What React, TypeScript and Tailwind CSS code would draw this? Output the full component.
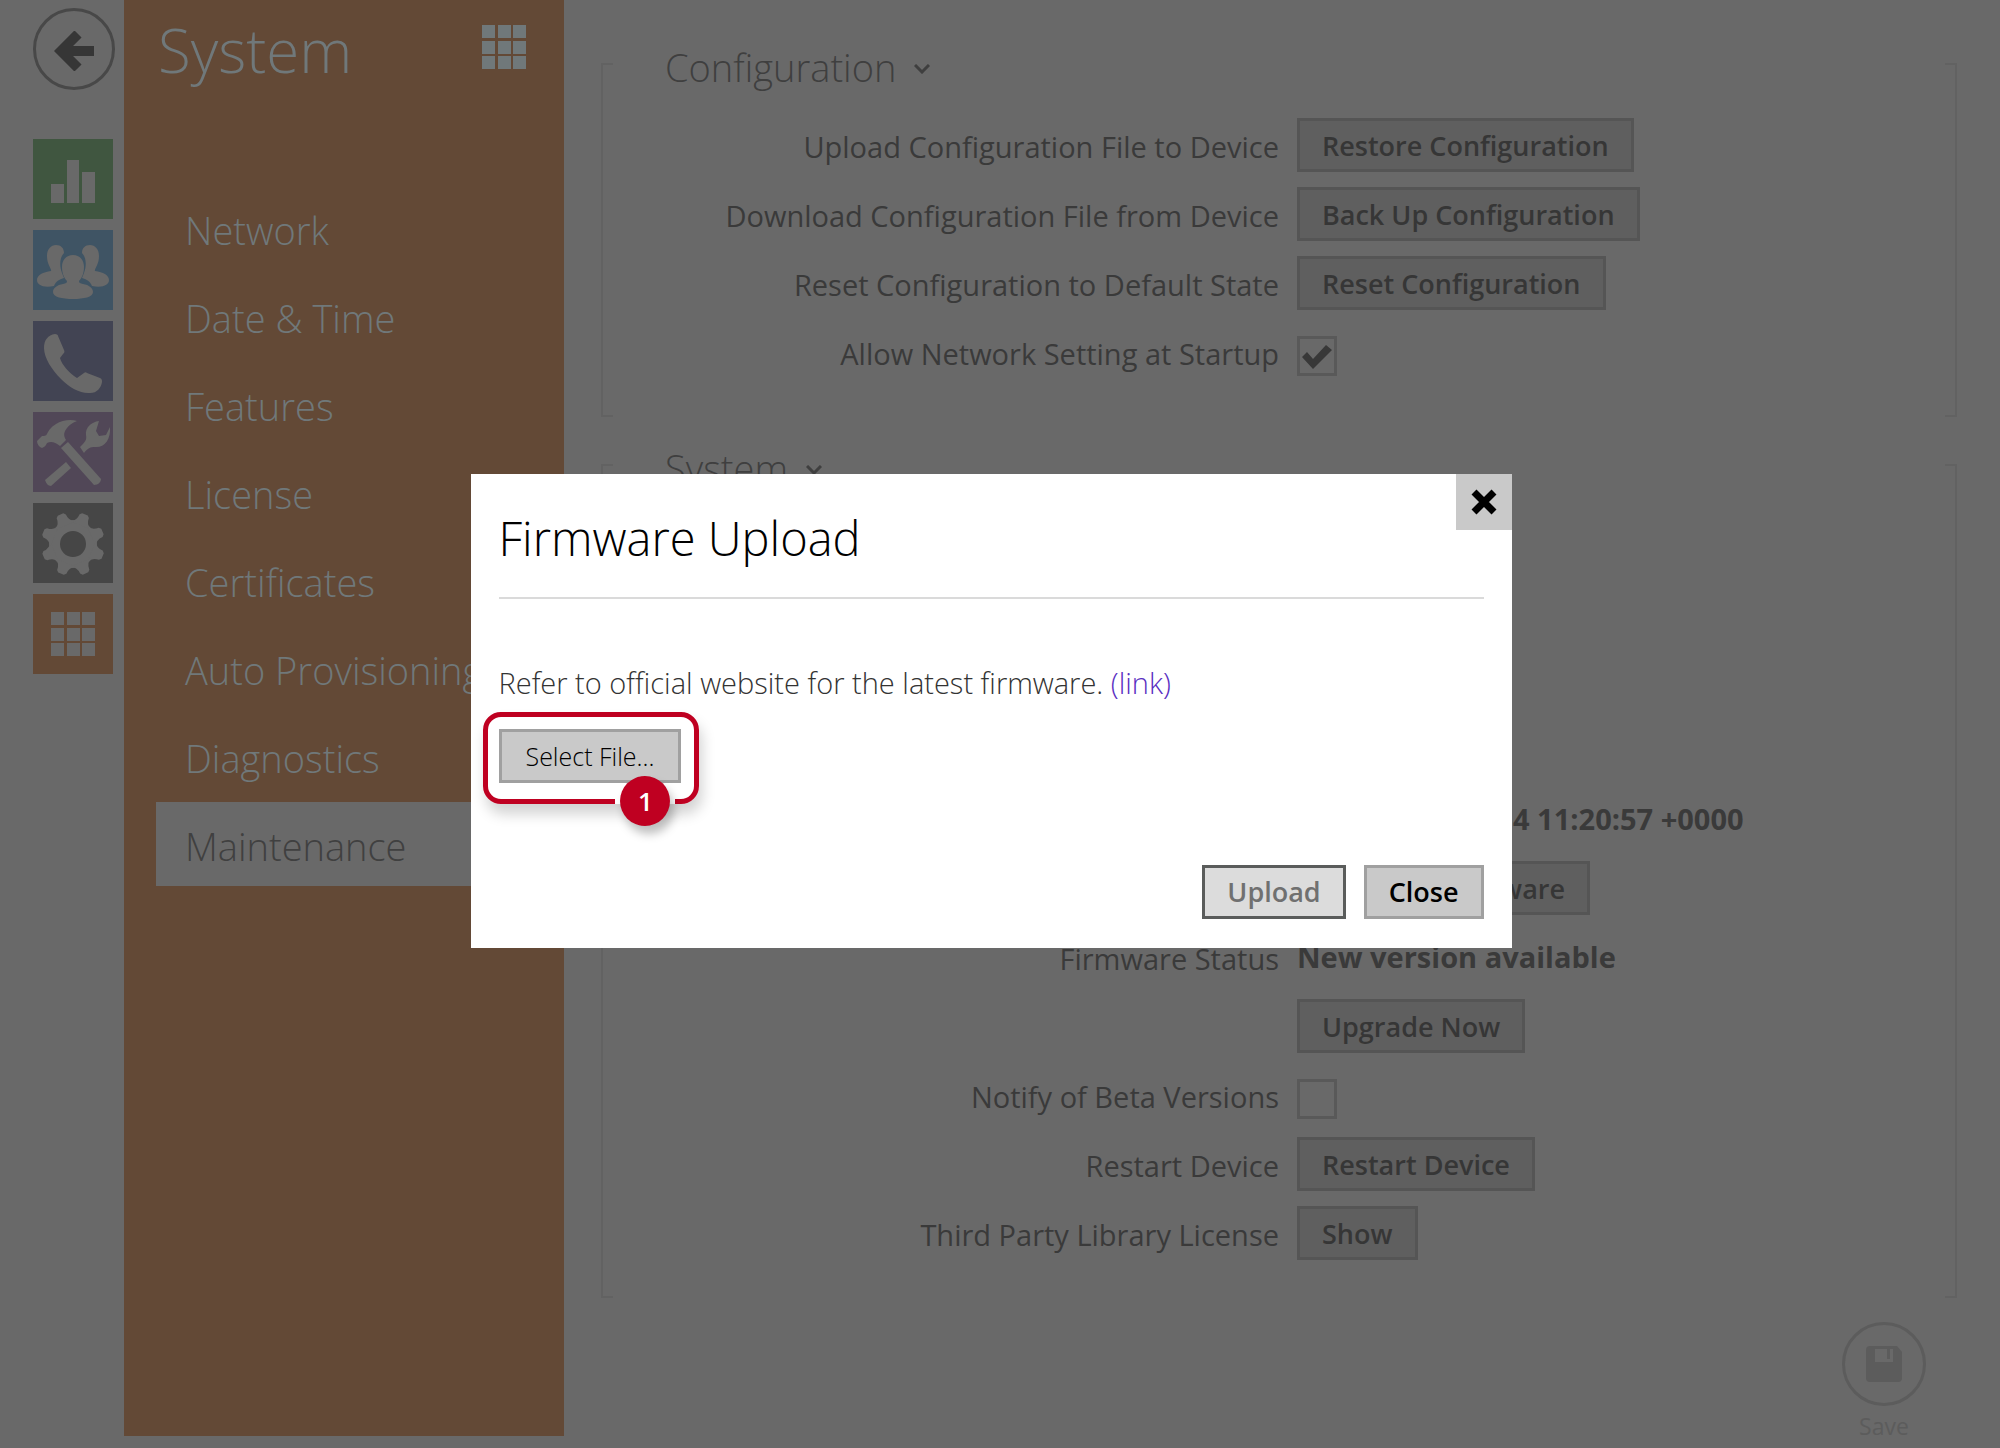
import React, { useState } from 'react';

const navItems = [
  'Network',
  'Date & Time',
  'Features',
  'License',
  'Certificates',
  'Auto Provisioning',
  'Diagnostics',
  'Maintenance',
];

const GridIcon: React.FC<{ className?: string }> = ({ className = '' }) => (
  <svg viewBox="0 0 44 44" className={className} fill="currentColor" aria-hidden="true">
    {[0, 16, 31].map(y =>
      [0, 16, 31].map(x => <rect key={`${x}-${y}`} x={x} y={y} width="13" height="13" />)
    )}
  </svg>
);

const StatusIcon = () => (
  <svg viewBox="0 0 80 80" className="size-20" fill="currentColor" aria-hidden="true">
    <rect x="18" y="45" width="13" height="19" />
    <rect x="34" y="21" width="12" height="43" />
    <rect x="49" y="33" width="13" height="31" />
  </svg>
);

const DirectoryIcon = () => (
  <svg viewBox="0 0 80 80" className="size-20" fill="currentColor" aria-hidden="true">
    <path d="M23 15c5 0 8 3 8 8-4 4-5 12-2 20l2 5c-4 1-8 3-10 8C10 58 4 55 4 50c0-5 6-8 14-9 1-2-4-6-4-15 0-7 4-11 9-11z" />
    <path d="M57 15c-5 0-8 3-8 8 4 4 5 12 2 20l-2 5c4 1 8 3 10 8 11 2 17-1 17-6 0-5-6-8-14-9-1-2 4-6 4-15 0-7-4-11-9-11z" />
    <path d="M40 25c7 0 11 5 11 12 0 6-2 11-5 14 0 2 1 2 4 3 6 1 10 4 10 8 0 5-9 7-20 7s-20-2-20-7c0-4 4-7 10-8 3-1 4-1 4-3-3-3-5-8-5-14 0-7 4-12 11-12z" />
  </svg>
);

const PhoneIcon = () => (
  <svg viewBox="0 0 80 80" className="size-20" fill="currentColor" aria-hidden="true">
    <path d="M22 13c2 0 3 1 3 2l6 14c1 2 0 3-1 4l-3 4c2 7 9 15 17 20l7-5c1-1 2-1 3 0l13 5c2 1 2 2 2 4-1 6-5 11-12 11-9 1-20-5-29-14S11 37 11 27c0-8 4-13 11-14z" />
  </svg>
);

const ToolsIcon = () => (
  <svg viewBox="0 0 80 80" className="size-20" fill="currentColor" aria-hidden="true">
    <path d="M44 9c-6-2-15-1-21 3-5 3-7 6-9 10-1 2-3 2-5 2l-5 5c0 3 2 6 5 7 3-1 4-3 5-5 4-2 8-1 13 3l6-6c-3-5-2-8 1-12 2-3 5-5 10-7z" />
    <path d="M28 36l7-6 33 37c0 3-3 6-7 6z" />
    <path d="M33 50l5 6-20 18c-3 0-5-3-6-6z" />
    <path d="M66 9c-8 1-14 7-13 14 1 5-1 7-6 12l4 6c4-5 6-6 11-6 9 1 16-7 15-20l-4 8-7 1-3-5z" />
  </svg>
);

const GearIcon = () => (
  <svg viewBox="0 0 80 80" className="size-20" fill="currentColor" aria-hidden="true">
    <path
      fillRule="evenodd"
      d="M40 17a24 24 0 1 0 0 48a24 24 0 1 0 0-48zM40 28a13 13 0 1 1 0 26a13 13 0 1 1 0-26z"
    />
    {[22, 67, 112, 157, 202, 247, 292, 337].map(deg => (
      <path key={deg} transform={`rotate(${deg} 40 41)`} d="M29 21q6-3 6-10l2-2h6l2 2q0 7 6 10z" />
    ))}
  </svg>
);

const tiles = [
  { name: 'Status', color: 'bg-[#405640]', icon: <StatusIcon /> },
  { name: 'Directory', color: 'bg-[#3f5464]', icon: <DirectoryIcon /> },
  { name: 'Phone', color: 'bg-[#424453]', icon: <PhoneIcon /> },
  { name: 'Tools', color: 'bg-[#514757]', icon: <ToolsIcon /> },
  { name: 'Settings', color: 'bg-[#464646]', icon: <GearIcon /> },
  { name: 'System', color: 'bg-[#634936]', icon: <GridIcon className="size-11" /> },
];

interface SectionProps {
  title: string;
  children: React.ReactNode;
}

// Group of settings framed by a square bracket on each side
const Section: React.FC<SectionProps> = ({ title, children }) => (
  <section className="flex">
    <div className="w-3 border-2 border-r-0 border-[#626262]" />
    <div className="flex-1 pb-[38px]">
      <h2 className="-mt-4 pl-[52px] text-[38px] leading-[40px] font-light text-[#3f3f3f]">
        <button className="flex items-center gap-[18px]">
          {title}
          <svg viewBox="0 0 16 10" className="mt-1 w-4" fill="none" stroke="currentColor" strokeWidth="3">
            <path d="M1 1l7 7 7-7" />
          </svg>
        </button>
      </h2>
      {children}
    </div>
    <div className="w-3 border-2 border-l-0 border-[#626262]" />
  </section>
);

interface RowProps {
  label?: string;
  htmlFor?: string;
  children: React.ReactNode;
}

const Row: React.FC<RowProps> = ({ label, htmlFor, children }) => (
  <div className="flex h-[54px] items-center gap-[18px]">
    <div className="w-1/2 pt-1 text-right">{label && <label htmlFor={htmlFor}>{label}</label>}</div>
    {children}
  </div>
);

interface PageButtonProps {
  id?: string;
  className?: string;
  children: React.ReactNode;
}

const PageButton: React.FC<PageButtonProps> = ({ id, className = '', children }) => (
  <button
    id={id}
    className={`h-[54px] border-3 border-[#555555] bg-[#5f5f5f] px-[22px] pt-[2px] text-[27px] leading-[36px] font-semibold text-[#363636] ${className}`}
  >
    {children}
  </button>
);

interface CheckboxProps {
  id: string;
  checked: boolean;
  onChange: (checked: boolean) => void;
}

const Checkbox: React.FC<CheckboxProps> = ({ id, checked, onChange }) => (
  <span className="mt-2 grid size-10">
    <input
      id={id}
      type="checkbox"
      checked={checked}
      onChange={e => onChange(e.target.checked)}
      className="col-start-1 row-start-1 size-10 appearance-none border-3 border-[#595959]"
    />
    {checked && (
      <svg viewBox="0 0 40 40" className="pointer-events-none col-start-1 row-start-1 size-10" fill="#383838">
        <path d="M5 21l5-5 6 7L29 9l6 5-19 19z" />
      </svg>
    )}
  </span>
);

const FirmwareDialog: React.FC<{ onClose: () => void }> = ({ onClose }) => (
  <div className="fixed inset-0 flex items-center justify-center pr-[18px] pb-[26px]">
    <div role="dialog" aria-labelledby="dialog-title" className="w-[1041px] max-w-full bg-white text-black">
      <div className="flex items-start justify-between pl-7">
        <h2 id="dialog-title" className="pt-[30px] text-[47px] leading-[68px] font-light">
          Firmware Upload
        </h2>
        <button
          aria-label="Close dialog"
          onClick={onClose}
          className="flex size-14 items-center justify-center bg-[#c9c9c9]"
        >
          <svg viewBox="0 0 26 26" className="size-[26px]" fill="none" stroke="currentColor" strokeWidth="7">
            <path d="M3 3l20 20M23 3L3 23" />
          </svg>
        </button>
      </div>
      <div className="px-7 pt-[25px] pb-[29px]">
        <hr className="border-t-2 border-[#dadada]" />
        <p className="pt-[65px] text-[29px] leading-[38px] font-light text-[#333333]">
          Refer to official website for the latest firmware.{' '}
          <a href="#" className="text-[#5a2fc2]">
            (link)
          </a>
        </p>
        <div className="relative mt-[27px] w-fit">
          <button className="h-[54px] border-3 border-[#a0a0a0] bg-[#c9c9c9] px-6 text-[25px] leading-[36px] font-light">
            Select File...
          </button>
          {/* numbered callout, the frame is cut open around the badge */}
          <div className="pointer-events-none absolute -top-[17px] -right-[18px] -bottom-[21px] -left-4 rounded-[18px] border-5 border-[#bf0021] shadow-[3px_10px_14px_rgba(0,0,0,0.18)]" />
          <div className="absolute right-[6px] -bottom-[21px] h-[5px] w-[60px] bg-white" />
          <div className="absolute right-[11px] -bottom-[43px] flex size-[50px] items-center justify-center rounded-full bg-[#bf0021] text-[26px] font-semibold text-white shadow-[4px_8px_10px_rgba(0,0,0,0.25)]">
            1
          </div>
        </div>
        <div className="mt-[82px] flex justify-end gap-[18px] text-[27px] leading-[36px] font-semibold">
          <button className="h-[54px] border-3 border-[#5a5c5b] bg-[#dcdcdc] px-[22px] text-[#707070]">
            Upload
          </button>
          <button onClick={onClose} className="h-[54px] border-3 border-[#a0a0a0] bg-[#c9c9c9] px-[22px]">
            Close
          </button>
        </div>
      </div>
    </div>
  </div>
);

export default function App() {
  const [active, setActive] = useState('Maintenance');
  const [networkSetting, setNetworkSetting] = useState(true);
  const [betaVersions, setBetaVersions] = useState(false);
  const [dialogOpen, setDialogOpen] = useState(true);

  return (
    <div className="flex min-h-screen bg-[#696969] font-['Open_Sans',sans-serif]">
      <div className="flex w-[124px] shrink-0 flex-col pt-2 pl-[33px]">
        <button
          aria-label="Back"
          className="flex size-[82px] items-center justify-center rounded-full border-3 border-[#484848] text-[#363636]"
        >
          <svg viewBox="0 0 40 40" className="mt-1 size-10" fill="none" stroke="currentColor" strokeWidth="10">
            <path d="M40 20H8M24 3L7 20l17 17" />
          </svg>
        </button>
        <div className="mt-[49px] flex flex-col gap-[11px]">
          {tiles.map(tile => (
            <a
              key={tile.name}
              href="#"
              aria-label={tile.name}
              className={`flex size-20 items-center justify-center text-[#696969] ${tile.color}`}
            >
              {tile.icon}
            </a>
          ))}
        </div>
      </div>

      <aside className="mb-3 w-[440px] shrink-0 bg-[#634936] text-[#70787a]">
        <div className="flex items-start justify-between pr-[38px] pl-[34px]">
          <h1 className="text-[60px] leading-[100px] font-light">System</h1>
          <GridIcon className="mt-[25px] size-11" />
        </div>
        <nav className="mt-[86px] flex flex-col gap-1 pl-8">
          {navItems.map(item => (
            <a
              key={item}
              href="#"
              onClick={() => setActive(item)}
              className={`pt-1 pl-[29px] text-[38px] leading-[80px] font-light ${
                item === active ? 'bg-[#696969] text-[#404040]' : ''
              }`}
            >
              {item}
            </a>
          ))}
        </nav>
      </aside>

      <main className="flex flex-1 flex-col pt-[63px] pr-[43px] pl-[37px] text-[29px] leading-[38px] text-[#3a3a3a]">
        <Section title="Configuration">
          <div className="mt-[31px] flex flex-col gap-[15px]">
            <Row label="Upload Configuration File to Device" htmlFor="restore">
              <PageButton id="restore">Restore Configuration</PageButton>
            </Row>
            <Row label="Download Configuration File from Device" htmlFor="backup">
              <PageButton id="backup">Back Up Configuration</PageButton>
            </Row>
            <Row label="Reset Configuration to Default State" htmlFor="reset">
              <PageButton id="reset">Reset Configuration</PageButton>
            </Row>
            <Row label="Allow Network Setting at Startup" htmlFor="network-setting">
              <Checkbox id="network-setting" checked={networkSetting} onChange={setNetworkSetting} />
            </Row>
          </div>
        </Section>

        <div className="mt-[47px]">
          <Section title="System">
            <div className="mt-[304px] flex flex-col gap-[15px]">
              <Row>
                <span className="pl-[216px] font-bold">4 11:20:57 +0000</span>
              </Row>
              <Row>
                <PageButton className="w-[293px] text-right">ware</PageButton>
              </Row>
              <Row label="Firmware Status">
                <span className="font-bold">New version available</span>
              </Row>
              <Row>
                <PageButton>Upgrade Now</PageButton>
              </Row>
              <Row label="Notify of Beta Versions" htmlFor="beta">
                <Checkbox id="beta" checked={betaVersions} onChange={setBetaVersions} />
              </Row>
              <Row label="Restart Device" htmlFor="restart">
                <PageButton id="restart">Restart Device</PageButton>
              </Row>
              <Row label="Third Party Library License" htmlFor="license">
                <PageButton id="license">Show</PageButton>
              </Row>
            </div>
          </Section>
        </div>

        <button className="mt-6 mr-[31px] flex flex-col items-center self-end text-[23px] leading-[40px] text-[#5c5c5c]">
          <span className="flex size-[84px] items-center justify-center rounded-full border-3">
            <svg viewBox="0 0 36 36" className="size-9" fill="currentColor" aria-hidden="true">
              <path
                fillRule="evenodd"
                d="M4 0h27l5 6v26a4 4 0 0 1-4 4H4a4 4 0 0 1-4-4V4a4 4 0 0 1 4-4zM9 3v13h18V3h-3v10h-3V3z"
              />
            </svg>
          </span>
          Save
        </button>
      </main>

      {dialogOpen && <FirmwareDialog onClose={() => setDialogOpen(false)} />}
    </div>
  );
}
